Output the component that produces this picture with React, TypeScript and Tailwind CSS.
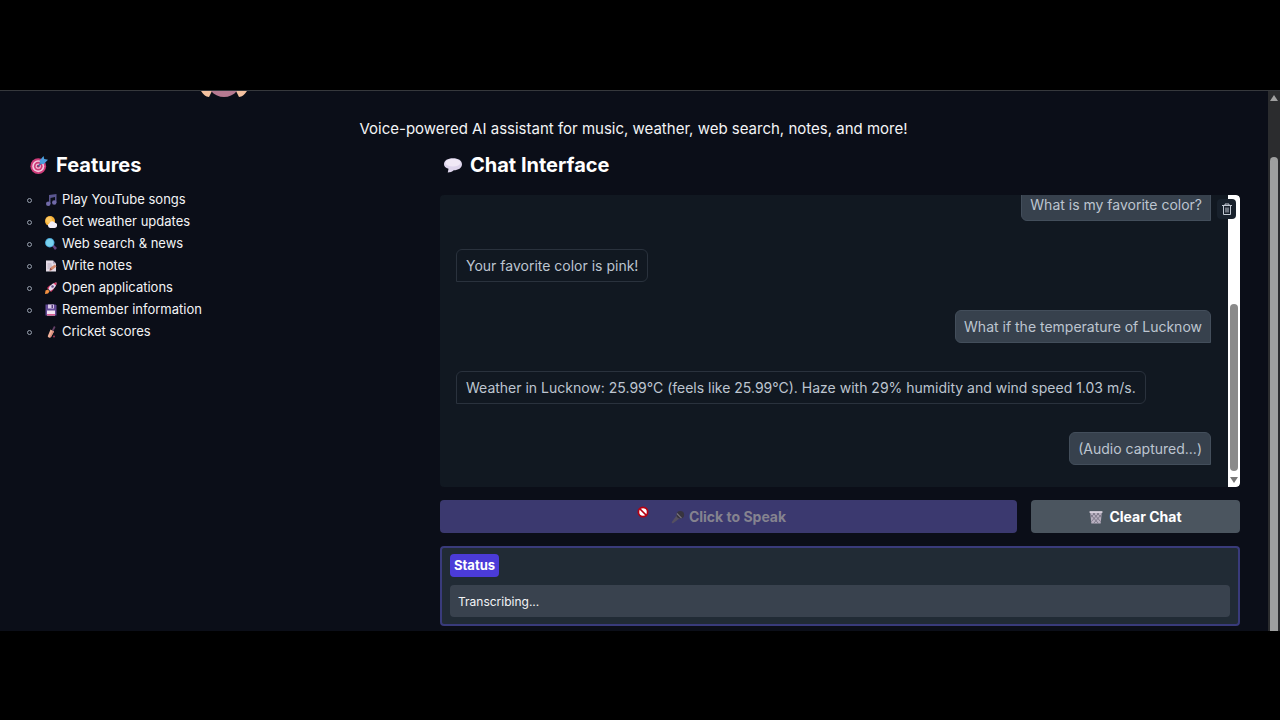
import { useState, type ReactNode } from 'react'

type Message = { from: 'user' | 'bot'; text: string }

const initialMessages: Message[] = [
  { from: 'user', text: 'What is my favorite color?' },
  { from: 'bot', text: 'Your favorite color is pink!' },
  { from: 'user', text: 'What if the temperature of Lucknow' },
  { from: 'bot', text: 'Weather in Lucknow: 25.99°C (feels like 25.99°C). Haze with 29% humidity and wind speed 1.03 m/s.' },
  { from: 'user', text: '(Audio captured...)' },
]

function Icon({ children, className = 'h-3 w-3' }: { children: ReactNode; className?: string }) {
  return (
    <svg viewBox="0 0 24 24" className={`shrink-0 ${className}`} aria-hidden="true">
      {children}
    </svg>
  )
}

const features = [
  {
    label: 'Play YouTube songs',
    icon: (
      <Icon>
        <path d="M8 2 23 0v17h-3V6l-9 2v12H8z" fill="#5a568f" />
        <circle cx="6.5" cy="19.5" r="4.5" fill="#716aa8" />
        <circle cx="18.5" cy="17" r="4.5" fill="#716aa8" />
      </Icon>
    ),
  },
  {
    label: 'Get weather updates',
    icon: (
      <Icon>
        <circle cx="10" cy="10" r="10" fill="#f9b43a" />
        <circle cx="8" cy="8" r="6" fill="#fdc964" />
        <path d="M10 24a5 5 0 0 1-1-9.5 6 6 0 0 1 11-1A5.3 5.3 0 0 1 19 24z" fill="#f3eef8" />
      </Icon>
    ),
  },
  {
    label: 'Web search & news',
    icon: (
      <Icon>
        <path d="m14 16 3-3 7 7-4 4z" fill="#67437f" />
        <circle cx="9.5" cy="9.5" r="9.5" fill="#4aa5d6" />
        <circle cx="9.5" cy="9.5" r="7.5" fill="#79d2ee" />
      </Icon>
    ),
  },
  {
    label: 'Write notes',
    icon: (
      <Icon>
        <path d="M2 1h14l6 6v16H2z" fill="#e4dbe6" />
        <path d="M16 1v6h6z" fill="#a99bb0" />
        <path d="M5 8h8M5 12h9M5 16h5" stroke="#a79cb0" strokeWidth="1.5" />
        <path d="m9 21 2-6 9-6 3 4-9 7z" fill="#d58a6c" />
        <path d="m9 21 2-6 3 5z" fill="#8c4a4c" />
      </Icon>
    ),
  },
  {
    label: 'Open applications',
    icon: (
      <Icon>
        <path d="m1 17 5-2 3 4-3 4-6 1z" fill="#f39040" />
        <path d="m4 12 5-5 5 1-7 7zM12 20l5-5 1-5-8 8z" fill="#d83262" />
        <path d="M7 14C9 7 15 2 23 1c0 8-5 13-13 17z" fill="#e7d8ea" />
        <path d="M17 3c2-1 4-2 6-2 0 2 0 4-1 6z" fill="#dc3766" />
        <circle cx="15" cy="9" r="2.5" fill="#66528c" />
      </Icon>
    ),
  },
  {
    label: 'Remember information',
    icon: (
      <Icon>
        <path d="M1 1h20l2 2v20H1z" fill="#634a96" />
        <path d="M6 1h12v8H6z" fill="#d9c9e8" />
        <path d="M13 2h3v6h-3z" fill="#573c80" />
        <path d="M4 13h16v10H4z" fill="#f2e5f3" />
        <path d="M4 20h16v3H4z" fill="#d85c91" />
      </Icon>
    ),
  },
  {
    label: 'Cricket scores',
    icon: (
      <Icon>
        <path d="m14 8 4-8 3 2-4 8z" fill="#654067" />
        <path d="m11 7 7 4-6 11c-2 3-8 1-6-3z" fill="#f0b19a" />
        <path d="m15 9 3 2-6 11-3 1z" fill="#d98b7c" />
        <circle cx="18" cy="21" r="2" fill="#9b3552" />
      </Icon>
    ),
  },
]

function TargetIcon() {
  return (
    <Icon className="h-[18px] w-[18px]">
      <circle cx="11" cy="13.5" r="10.5" fill="#cf3c7a" />
      <circle cx="11" cy="13.5" r="8" fill="#f3c9df" />
      <circle cx="11" cy="13.5" r="5.8" fill="#cf3c7a" />
      <circle cx="11" cy="13.5" r="3.5" fill="#f0bcd5" />
      <circle cx="11" cy="13.5" r="1.8" fill="#a52c66" />
      <path d="m11 13.5 6-6" stroke="#38649c" strokeWidth="1.8" />
      <path d="m13 6 5-6 1 4 5 1-6 6-5-1z" fill="#4d9fdf" />
    </Icon>
  )
}

function SpeechIcon() {
  return (
    <Icon className="h-[18px] w-[18px]">
      <path d="M12 3c7 0 12 3 12 8s-5 8-11 8c-2 2-5 3-8 3l1-5C2 16 0 14 0 11c0-5 5-8 12-8z" fill="#ded5ec" />
      <ellipse cx="12" cy="9" rx="10" ry="5" fill="#f0e9f6" />
    </Icon>
  )
}

function MicIcon() {
  return (
    <Icon className="h-[14px] w-[14px]">
      <path d="M10 9 15 14 3 23 1 21z" fill="#555061" />
      <circle cx="16" cy="8" r="6.5" fill="#37343f" />
      <path d="m10 6 8 8" stroke="#77727f" strokeWidth="2" />
    </Icon>
  )
}

function BasketIcon() {
  return (
    <Icon className="h-[14px] w-[14px]">
      <path d="M2 4h20l-2 19H4z" fill="#b7afbf" />
      <path d="m3 8 13 15M7 5l13 15M14 5l7 8M21 8 8 23M17 5 4 20M10 5l-7 8" stroke="#6f6b7c" strokeWidth="1.3" />
      <path d="M1 2h22v3H1z" fill="#ddd5e2" />
    </Icon>
  )
}

function BlockedCursor() {
  return (
    <Icon className="h-3 w-3">
      <circle cx="12" cy="12" r="11" fill="#b50012" />
      <circle cx="12" cy="12" r="7.5" fill="#fff" />
      <path d="m6 6 12 12" stroke="#b50012" strokeWidth="3.5" />
    </Icon>
  )
}

export default function App() {
  const [messages, setMessages] = useState<Message[]>(initialMessages)
  const clearChat = () => setMessages([])

  return (
    <div className="min-h-screen bg-black py-[90px] font-['Inter',sans-serif] text-gray-100">
      <div className="flex overflow-hidden border-t border-[#36383c] bg-[#0b0e18]">
        <main className="min-w-0 flex-1 pr-7 pb-[5px] pl-[27px]">
          {/* Header */}
          <header className="flex flex-col items-center">
            <div className="flex h-7 w-full items-start pl-[174px]">
              <svg viewBox="0 0 46 7" className="h-[7px] w-[46px]" aria-hidden="true">
                <path d="M0 0h11L8 6C5 6 2 3 0 0zM35 0h11c-2 3-5 6-8 6z" fill="#f3c1a0" />
                <path d="M10 0h26c-7 8-19 8-26 0z" fill="#b67a91" />
              </svg>
            </div>
            <p className="text-[15px] leading-5">
              Voice-powered AI assistant for music, weather, web search, notes, and more!
            </p>
          </header>

          <div className="grid grid-cols-[1fr_2fr] gap-[13px] pt-3">
            {/* Features */}
            <section>
              <h2 className="flex h-7 items-center gap-2 pl-[3px] text-xl font-bold text-white">
                <TargetIcon />
                Features
              </h2>
              <ul className="pt-[10px] text-[13px]">
                {features.map((feature) => (
                  <li key={feature.label} className="flex h-[22px] items-center">
                    <span className="mr-[13px] h-[5px] w-[5px] rounded-full border border-gray-400" />
                    {feature.icon}
                    <span className="pl-[5px]">{feature.label}</span>
                  </li>
                ))}
              </ul>
            </section>

            {/* Chat */}
            <section className="min-w-0">
              <h2 className="flex h-7 items-center gap-2 pl-1 text-xl font-bold text-white">
                <SpeechIcon />
                Chat Interface
              </h2>

              <div className="relative mt-4 flex h-[292px] overflow-hidden rounded-sm bg-[#111821]">
                <div className="flex min-w-0 flex-1 flex-col justify-end gap-7 pr-[17px] pb-[22px] pl-4 text-sm text-[#bdc5d0]">
                  {messages.map((message) => (
                    <div
                      key={message.text}
                      className={
                        message.from === 'user'
                          ? 'flex h-[33px] shrink-0 items-center self-end rounded-md rounded-br-none border border-[#434e5b] bg-[#37414d] px-2'
                          : 'flex h-[33px] shrink-0 items-center self-start rounded-md rounded-bl-none border border-[#2a323d] px-[9px]'
                      }
                    >
                      {message.text}
                    </div>
                  ))}
                </div>
                <div className="flex w-3 flex-col items-center justify-end rounded-r bg-white pb-1">
                  <div className="h-[167px] w-2 rounded-full bg-[#8a8a8a]" />
                  <svg viewBox="0 0 8 6" className="mt-1.5 h-1.5 w-2" aria-hidden="true">
                    <path d="M0 0h8L4 6z" fill="#777" />
                  </svg>
                </div>
                <button
                  type="button"
                  aria-label="Clear"
                  onClick={clearChat}
                  className="absolute top-1 right-1 flex h-5 w-[19px] items-center justify-center rounded-sm bg-[#18212c] text-[#c3cad4]"
                >
                  <svg viewBox="0 0 10 12" className="h-3 w-2.5" fill="none" stroke="currentColor" aria-hidden="true">
                    <path d="M0 2.5h10M3 2.5V1h4v1.5M1.5 2.5v9h7v-9M4 4.5v5M6 4.5v5" />
                  </svg>
                </button>
              </div>

              <div className="mt-[13px] flex gap-[14px] text-sm font-bold">
                <button
                  type="button"
                  disabled
                  className="relative flex h-[33px] flex-[577] cursor-not-allowed items-center justify-center gap-1 rounded bg-[#3b396f] text-[#85838f]"
                >
                  <span className="absolute top-1.5 left-[197px]">
                    <BlockedCursor />
                  </span>
                  <MicIcon />
                  Click to Speak
                </button>
                <button
                  type="button"
                  onClick={clearChat}
                  className="flex h-[33px] flex-[209] items-center justify-center gap-1.5 rounded bg-[#4b555f] text-white"
                >
                  <BasketIcon />
                  Clear Chat
                </button>
              </div>

              <div className="mt-[13px] rounded-sm border-2 border-[#393b7b] bg-[#212b35] px-2 pt-1.5 pb-[7px]">
                <label
                  htmlFor="status"
                  className="inline-flex h-[23px] items-center rounded bg-[#4b3bd8] px-1 align-top text-[13px] font-bold text-white"
                >
                  Status
                </label>
                <input
                  id="status"
                  readOnly
                  value="Transcribing..."
                  className="mt-[7px] block h-8 w-full rounded-sm bg-[#39424e] px-2 text-xs outline-none"
                />
              </div>
            </section>
          </div>
        </main>

        {/* Page scrollbar */}
        <div className="flex w-3 flex-col items-center bg-[#2b2c2e]">
          <svg viewBox="0 0 8 6" className="mt-1 h-1.5 w-2" aria-hidden="true">
            <path d="M0 6h8L4 0z" fill="#a0a0a0" />
          </svg>
          <div className="mt-14 w-2 flex-1 rounded-t-full bg-[#9e9f9f]" />
        </div>
      </div>
    </div>
  )
}
